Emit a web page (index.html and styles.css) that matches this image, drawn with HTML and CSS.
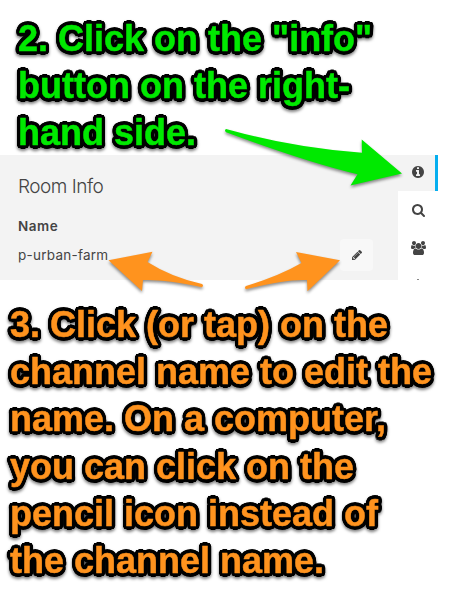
FILE: index.html
```
<!DOCTYPE html>
<html lang="en">
<head>
<meta charset="utf-8">
<title>Room Info</title>
<link rel="stylesheet" href="styles.css">
</head>
<body>
<main class="guide">
  <p class="step step-info">2. Click on the "info"<br>button on the right-<br>hand side.</p>
  <section class="app">
    <div class="panel">
      <h2 class="panel-title">Room Info</h2>
      <h3 class="label">Name</h3>
      <div class="name-row">
        <span class="room-name">p-urban-farm</span>
        <button class="edit" aria-label="Edit"><svg class="icon-pencil" viewBox="0 149 1515 1515"><path d="M363 1536l91-91-235-235-91 91v107h128v128h107zm523-928q0-22-22-22-10 0-17 7l-542 542q-7 7-7 17 0 22 22 22 10 0 17-7l542-542q7-7 7-17zm-54-192l416 416-832 832h-416v-416zm683 96q0 53-37 90l-166 166-416-416 166-165q36-38 90-38 53 0 91 38l235 234q37 39 37 91z"/></svg></button>
      </div>
    </div>
    <nav class="tabs">
      <div class="tab active"><svg class="icon-info" viewBox="0 128 1536 1536"><path d="M1024 1376v-160q0-14-9-23t-23-9h-96v-512q0-14-9-23t-23-9h-320q-14 0-23 9t-9 23v160q0 14 9 23t23 9h96v320h-96q-14 0-23 9t-9 23v160q0 14 9 23t23 9h448q14 0 23-9t9-23zm-128-896v-160q0-14-9-23t-23-9h-192q-14 0-23 9t-9 23v160q0 14 9 23t23 9h192q14 0 23-9t9-23zm640 416q0 209-103 385.5t-279.5 279.5-385.5 103-385.5-103-279.5-279.5-103-385.5 103-385.5 279.5-279.5 385.5-103 385.5 103 279.5 279.5 103 385.5z"/></svg></div>
      <div class="tab"><svg class="icon-search" viewBox="0 128 1664 1664"><path d="M1152 832q0-185-131.5-316.5t-316.5-131.5-316.5 131.5-131.5 316.5 131.5 316.5 316.5 131.5 316.5-131.5 131.5-316.5zm512 832q0 52-38 90t-90 38q-54 0-90-38l-343-342q-179 124-399 124-143 0-273.5-55.5t-225-150-150-225-55.5-273.5 55.5-273.5 150-225 225-150 273.5-55.5 273.5 55.5 225 150 150 225 55.5 273.5q0 220-124 399l343 343q37 37 37 90z"/></svg></div>
      <div class="tab"><svg class="icon-users" viewBox="0 0 1920 1792"><path d="M593 896q-162 5-265 128h-134q-82 0-138-40.5t-56-118.5q0-353 124-353 6 0 43.5 21t97.5 42.5 119 21.5q67 0 133-23-5 37-5 66 0 139 81 256zm1071 637q0 120-73 189.5t-194 69.5h-874q-121 0-194-69.5t-73-189.5q0-53 3.5-103.5t14-109 26.5-108.5 43-97.5 62-81 85.5-53.5 111.5-20q10 0 43 21.5t73 48 107 48 135 21.5 135-21.5 107-48 73-48 43-21.5q61 0 111.5 20t85.5 53.5 62 81 43 97.5 26.5 108.5 14 109 3.5 103.5zm-1024-1277q0 106-75 181t-181 75-181-75-75-181 75-181 181-75 181 75 75 181zm704 384q0 159-112.5 271.5t-271.5 112.5-271.5-112.5-112.5-271.5 112.5-271.5 271.5-112.5 271.5 112.5 112.5 271.5zm576 225q0 78-56 118.5t-138 40.5h-134q-103-123-265-128 81-117 81-256 0-29-5-66 66 23 133 23 59 0 119-21.5t97.5-42.5 43.5-21q124 0 124 353zm-128-609q0 106-75 181t-181 75-181-75-75-181 75-181 181-75 181 75 75 181z"/></svg></div>
      <div class="tab cut"><i class="icon-cut"></i></div>
    </nav>
  </section>
  <p class="step step-edit">3. Click (or tap) on the<br>channel name to edit the<br>name. On a computer,<br>you can click on the<br>pencil icon instead of<br>the channel name.</p>
  <svg class="arrows" viewBox="0 0 449 593">
    <path class="green" d="M226 129Q294 148 362 152.7L361.7 139.5L402 173.5L350.5 185.5L357.5 174.3Q309 163 226 132.3Q224 130.5 226 129Z"/>
    <path class="orange" d="M108.5 260.3L152.5 251.7L147.5 262Q171 277 202 284Q204 285.500 202 287.200Q163 279 143 280L142 291Z"/>
    <path class="orange" d="M340 260.200L296 252L301.500 263Q279 276 246 286Q244 287.700 246 289.200Q286 279 307 280L307.500 291.200Z"/>
  </svg>
</main>
</body>
</html>
```
FILE: styles.css
```
* { box-sizing: border-box; }
body { margin: 0; background: #fff; }
.guide {
  position: relative;
  width: 449px;
  height: 593px;
  overflow: hidden;
}
/* a ring of shadows gives the letters a round-cornered outline */
.step {
  margin: 0;
  font: bold 36px/47.2px "Liberation Sans", Arial, sans-serif;
  white-space: nowrap;
  -webkit-text-stroke: .5px currentColor;
  text-shadow:
    3.6px 0 #000, 3.48px .93px #000, 3.12px 1.8px #000, 2.55px 2.55px #000, 1.8px 3.12px #000, .93px 3.48px #000,
    0 3.6px #000, -.93px 3.48px #000, -1.8px 3.12px #000, -2.55px 2.55px #000, -3.12px 1.8px #000, -3.48px .93px #000,
    -3.6px 0 #000, -3.48px -.93px #000, -3.12px -1.8px #000, -2.55px -2.55px #000, -1.8px -3.12px #000, -.93px -3.48px #000,
    0 -3.6px #000, .93px -3.48px #000, 1.8px -3.12px #000, 2.55px -2.55px #000, 3.12px -1.8px #000, 3.48px -.93px #000;
  filter: drop-shadow(0 2px 1.5px rgba(0, 0, 0, .5));
}
.step-info {
  height: 155px;
  padding: 15px 0 0 18px;
  color: #00e900;
}
.step-edit {
  padding: 21px 0 0 10px;
  color: #ff931e;
}
.app {
  display: flex;
  width: 438px;
  height: 125px;
  overflow: hidden;
  color: #444;
  font-family: Inter, sans-serif;
}
.panel {
  width: 398px;
  padding: 20px 24px 0 18px;
  background: #f3f3f3;
}
.panel-title {
  margin: 0;
  font-size: 19px;
  font-weight: 300;
  line-height: 24px;
  letter-spacing: -.5px;
}
.label {
  margin: 17px 0 0;
  font-size: 13.5px;
  font-weight: 600;
  line-height: 20px;
  letter-spacing: .5px;
}
.name-row {
  display: flex;
  align-items: center;
  justify-content: space-between;
  margin-top: 3px;
}
.room-name { font-size: 13.5px; letter-spacing: .25px; }
.edit {
  display: flex;
  align-items: center;
  justify-content: center;
  width: 33px;
  height: 32px;
  margin-right: 1px;
  padding: 0;
  border: 0;
  border-radius: 4px;
  background: #f8f8f8;
}
svg { display: block; fill: #444; }
.icon-pencil { width: 10px; height: 10px; }
.tabs { width: 40px; background: #fff; }
.tab {
  display: flex;
  align-items: center;
  justify-content: center;
  height: 38px;
}
.tab.active {
  height: 36px;
  padding: 0 0 2px 3px;
  border-right: 3px solid #05aeef;
  background: #f3f3f3;
}
.tab.cut { align-items: flex-start; height: 13px; padding-top: 12px; }
.icon-info { width: 12px; height: 12px; }
.icon-search { width: 13px; height: 13px; }
.icon-users { width: 15px; height: 14px; }
.icon-cut { width: 2px; height: 1px; background: #888; }
.arrows {
  position: absolute;
  inset: 0;
  width: 449px;
  height: 593px;
  filter: drop-shadow(0 2px 1.5px rgba(0, 0, 0, .45));
  pointer-events: none;
}
.green { fill: #00e900; }
.orange { fill: #ff931e; }
```
